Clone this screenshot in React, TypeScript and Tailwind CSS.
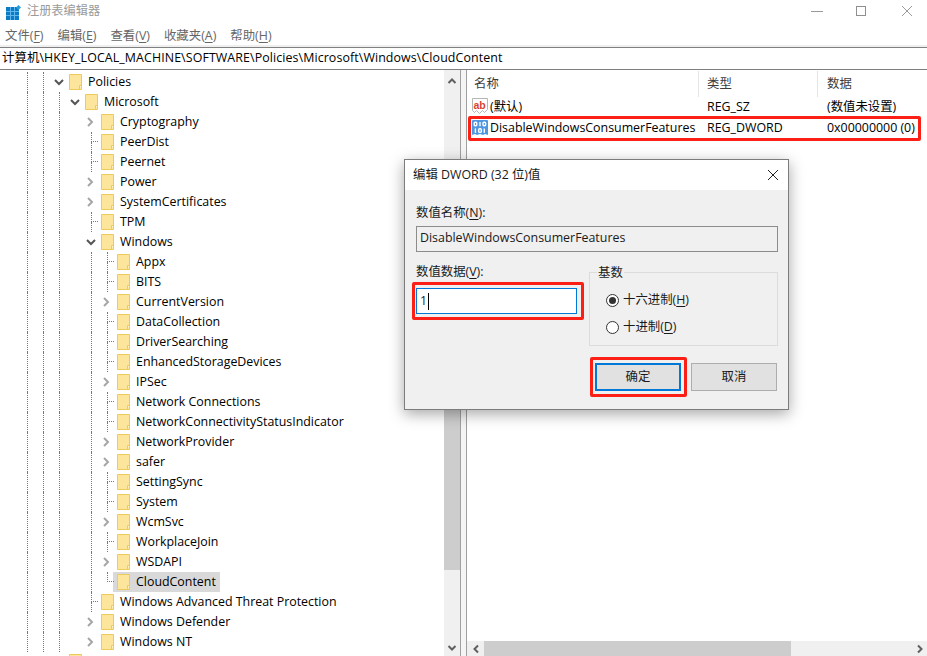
import React from "react";

const FONT = "font-['Open_Sans','Noto_Sans_CJK_SC',sans-serif]";

type Row = { label: string; depth: number; toggle?: "open" | "closed"; selected?: boolean; last?: boolean };

const rows: Row[] = [
  { label: "Policies", depth: 0, toggle: "open" },
  { label: "Microsoft", depth: 1, toggle: "open" },
  { label: "Cryptography", depth: 2, toggle: "closed" },
  { label: "PeerDist", depth: 2 },
  { label: "Peernet", depth: 2 },
  { label: "Power", depth: 2, toggle: "closed" },
  { label: "SystemCertificates", depth: 2, toggle: "closed" },
  { label: "TPM", depth: 2 },
  { label: "Windows", depth: 2, toggle: "open" },
  { label: "Appx", depth: 3 },
  { label: "BITS", depth: 3 },
  { label: "CurrentVersion", depth: 3, toggle: "closed" },
  { label: "DataCollection", depth: 3 },
  { label: "DriverSearching", depth: 3 },
  { label: "EnhancedStorageDevices", depth: 3 },
  { label: "IPSec", depth: 3, toggle: "closed" },
  { label: "Network Connections", depth: 3 },
  { label: "NetworkConnectivityStatusIndicator", depth: 3 },
  { label: "NetworkProvider", depth: 3, toggle: "closed" },
  { label: "safer", depth: 3, toggle: "closed" },
  { label: "SettingSync", depth: 3 },
  { label: "System", depth: 3 },
  { label: "WcmSvc", depth: 3, toggle: "closed" },
  { label: "WorkplaceJoin", depth: 3 },
  { label: "WSDAPI", depth: 3, toggle: "closed" },
  { label: "CloudContent", depth: 3, selected: true, last: true },
  { label: "Windows Advanced Threat Protection", depth: 2 },
  { label: "Windows Defender", depth: 2, toggle: "closed" },
  { label: "Windows NT", depth: 2, toggle: "closed" },
];

function Folder() {
  return (
    <svg width="13" height="16" viewBox="0 0 13 16" className="shrink-0">
      <path d="M.5.5h12v15H.5z" fill="#fde59b" stroke="#eccb5e" />
      <path d="M10.5 15.5v-4h2" fill="#fff4c8" stroke="#eccb5e" />
    </svg>
  );
}

function Toggle({ kind }: { kind: "open" | "closed" }) {
  if (kind === "open")
    return (
      <svg width="10" height="7" viewBox="0 0 10 7">
        <path d="M1 1l4 4 4-4" fill="none" stroke="#555" strokeWidth="2" />
      </svg>
    );
  return (
    <svg width="7" height="10" viewBox="0 0 7 10">
      <path d="M1 1l4 4-4 4" fill="none" stroke="#a6a6a6" strokeWidth="2" />
    </svg>
  );
}

function Guide() {
  return <div className="h-full w-4 shrink-0 border-l border-dotted border-[#777]" />;
}

function Blank() {
  return <div className="h-full w-4 shrink-0" />;
}

function Marker({ row }: { row: Row }) {
  const line = row.depth !== 1;
  return (
    <div className="relative flex h-full w-[10px] shrink-0 flex-col">
      <div className={`h-1/2 w-[7px] ${line ? "border-l border-dotted border-[#777]" : ""} ${row.toggle ? "" : "border-b border-dotted border-[#777]"}`} />
      {!row.last && <div className={`h-1/2 ${line ? "border-l border-dotted border-[#777]" : ""}`} />}
      {row.toggle && (
        <div className="absolute left-[-6px] top-0 flex h-full w-[11px] items-center justify-center bg-white">
          <Toggle kind={row.toggle} />
        </div>
      )}
    </div>
  );
}

function TreeRow({ row }: { row: Row }) {
  return (
    <div className="flex h-5 shrink-0 items-center pl-[27px]">
      <Guide />
      <Guide />
      {row.depth >= 1 && <Guide />}
      {row.depth >= 2 && <Blank />}
      {row.depth >= 3 && <Guide />}
      <Marker row={row} />
      <div className={`flex h-full shrink-0 items-center ${row.selected ? "-ml-[4px] bg-[#d9d9d9] pl-[4px]" : ""}`}>
        <Folder />
        <span className="pl-[6px] pr-[4px] whitespace-nowrap text-black">{row.label}</span>
      </div>
    </div>
  );
}

function ScrollArrow({ d }: { d: string }) {
  return (
    <svg width="10" height="10" viewBox="0 0 10 10">
      <path d={d} fill="none" stroke="#606060" strokeWidth="2" />
    </svg>
  );
}

function ValueRow({ icon, name, type, data, className }: { icon: React.ReactNode; name: string; type: string; data: string; className?: string }) {
  return (
    <div className={`flex h-5 items-center text-black ${className ?? ""}`}>
      <div className="flex w-[232px] items-center pl-[5px]">
        {icon}
        <span className="pl-[2px] whitespace-nowrap">{name}</span>
      </div>
      <div className="w-[120px] pl-[8px] whitespace-nowrap">{type}</div>
      <div className="whitespace-nowrap pl-[8px]">{data}</div>
    </div>
  );
}

const AbIcon = (
  <svg width="16" height="17" viewBox="0 0 16 17" className="shrink-0">
    <path d="M.5.5h15v11l-3 3-2-2-3 3-3-3-2 2-2-2z" fill="#fff" stroke="#b5b5b5" />
    <text x="1.5" y="10.5" fontSize="10.5" fontWeight="700" fill="#d9432f" fontFamily="Liberation Sans">ab</text>
  </svg>
);

const BinIcon = (
  <svg width="16" height="16" viewBox="0 0 16 16" className="shrink-0">
    <path d="M0 1q0-1 1-1h14q1 0 1 1v14l-3-1-2 1-3-1-3 1-2-1-3 1z" fill="#4f97e0" />
    <g fill="none" stroke="#fff" strokeWidth="1.4">
      <rect x="2.2" y="2.2" width="2.6" height="3.6" rx="1" />
      <path d="M8 2v4.2" />
      <rect x="11" y="2.2" width="2.6" height="3.6" rx="1" />
      <path d="M3.4 8.4v4.4" />
      <rect x="6.7" y="8.8" width="2.6" height="3.6" rx="1" />
      <path d="M12.3 8.4v4.4" />
    </g>
  </svg>
);

function U({ children }: { children: React.ReactNode }) {
  return <span className="underline underline-offset-2">{children}</span>;
}

function Radio({ checked }: { checked?: boolean }) {
  return (
    <span className="flex h-[13px] w-[13px] shrink-0 items-center justify-center rounded-full border border-[#333] bg-white">
      {checked && <span className="h-[7px] w-[7px] rounded-full bg-[#333]" />}
    </span>
  );
}

function Dialog() {
  return (
    <div className="absolute left-[404px] top-[159px] flex h-[251px] w-[385px] flex-col border border-[#7c7c7c] bg-[#f0f0f0] text-[#1a1a1a] shadow-[0_4px_14px_rgba(0,0,0,0.35)]">
      <div className="flex h-[30px] shrink-0 items-center justify-between bg-white pl-[8px] pr-[9px]">
        <span>编辑 DWORD (32 位)值</span>
        <svg width="12" height="12" viewBox="0 0 12 12">
          <path d="M1 1l10 10M11 1L1 11" stroke="#222" strokeWidth="1" fill="none" />
        </svg>
      </div>
      <div className="flex flex-1 flex-col pl-[11px] pt-[13px]">
        <div className="h-5 leading-5">数值名称(<U>N</U>):</div>
        <div className="mt-[3px] flex h-[26px] w-[362px] items-center border border-[#8c8c8c] bg-[#f0f0f0] pb-[1px] pl-[3px]">
          DisableWindowsConsumerFeatures
        </div>
        <div className="mt-[10px] flex">
          <div className="w-[173px]">
            <div className="h-5 leading-5">数值数据(<U>V</U>):</div>
            <div className="mt-[6px] flex h-[26px] w-[161px] items-center border border-[#0078d7] bg-white pl-[3px]">
              <span>1</span>
              <span className="ml-[1px] h-[17px] w-px bg-black" />
            </div>
          </div>
          <div className="relative mt-[10px] h-[74px] w-[189px] border border-[#dcdcdc]">
            <span className="absolute left-[7px] top-[-9px] bg-[#f0f0f0] px-[1px] leading-[18px]">基数</span>
            <div className="flex h-[36px] items-center gap-[4px] pl-[16px] pt-[18px]">
              <Radio checked />
              <span className="leading-[18px]">十六进制(<U>H</U>)</span>
            </div>
            <div className="flex h-[27px] items-center gap-[4px] pl-[16px] pt-[9px]">
              <Radio />
              <span className="leading-[18px]">十进制(<U>D</U>)</span>
            </div>
          </div>
        </div>
        <div className="mt-[17px] flex justify-end gap-[10px] pr-[11px]">
          <div className="flex h-[28px] w-[86px] items-center justify-center border-2 border-[#0078d7] bg-[#e1e1e1]">确定</div>
          <div className="flex h-[28px] w-[86px] items-center justify-center border border-[#adadad] bg-[#e1e1e1]">取消</div>
        </div>
      </div>
    </div>
  );
}

function Highlight({ className }: { className: string }) {
  return <div className={`absolute rounded-[2px] border-[3px] border-[#fb1f16] ${className}`} />;
}

export default function App() {
  return (
    <div className={`relative flex h-[656px] w-[927px] flex-col overflow-hidden bg-white text-[12.4px] ${FONT}`}>
      <div className="flex h-[22px] shrink-0 items-center justify-between">
        <div className="flex items-center pl-[6px]">
          <svg width="16" height="15" viewBox="0 0 16 15" className="mt-[4px] shrink-0 self-start">
            <path d="M0 2h13v13H0z" fill="#0a7bc4" />
            <path d="M4.5 2v13M8.5 2v13M0 6.5h13M0 10.5h13" stroke="#5fb6ea" strokeWidth="1" />
            <path d="M12.5 0l2.5 2.5L12.5 5 10 2.5z" fill="#2d9fd8" />
          </svg>
          <span className="pl-[5px] pt-[1px] text-[12.2px] text-[#9a9a9a]">注册表编辑器</span>
        </div>
        <div className="flex items-center">
          <div className="mr-[33px] h-px w-3 bg-[#9a9a9a]" />
          <div className="mr-[36px] h-[10px] w-[10px] border border-[#8f8f8f]" />
          <svg width="10" height="10" viewBox="0 0 10 10" className="mr-[15px]">
            <path d="M0 0l10 10M10 0L0 10" stroke="#9a9a9a" strokeWidth="1" />
          </svg>
        </div>
      </div>

      <div className="flex h-[23px] shrink-0 items-center gap-[14px] pl-[5px] pt-[6px] text-[#666]">
        <span>文件(<U>F</U>)</span>
        <span>编辑(<U>E</U>)</span>
        <span>查看(<U>V</U>)</span>
        <span>收藏夹(<U>A</U>)</span>
        <span>帮助(<U>H</U>)</span>
      </div>

      <div className="h-[2px] shrink-0 bg-[#efefef]" />
      <div className="flex h-[23px] shrink-0 items-center border-y border-y-[#808080] pl-[2px] tracking-[0.1px] whitespace-nowrap text-black">
        计算机\HKEY_LOCAL_MACHINE\SOFTWARE\Policies\Microsoft\Windows\CloudContent
      </div>

      <div className="flex min-h-0 flex-1">
        <div className="flex w-[444px] shrink-0 flex-col overflow-hidden pt-[2px]">
          {rows.map((r) => (
            <TreeRow key={r.label} row={r} />
          ))}
          <div className="flex h-5 shrink-0 items-center pl-[69px]">
            <Folder />
          </div>
        </div>

        <div className="flex w-[16px] shrink-0 flex-col bg-[#f0f0f0]">
          <div className="flex h-[22px] shrink-0 items-center justify-center">
            <ScrollArrow d="M1.5 7l3.5-3.5L8.5 7" />
          </div>
          <div className="mt-[208px] h-[270px] shrink-0 bg-[#cdcdcd]" />
          <div className="flex-1" />
          <div className="flex h-[16px] shrink-0 items-center justify-center">
            <ScrollArrow d="M1.5 3l3.5 3.5L8.5 3" />
          </div>
        </div>

        <div className="w-[7px] shrink-0 border-x border-x-[#a0a0a0] bg-[#f5f5f5]" />

        <div className="flex min-w-0 flex-1 flex-col">
          <div className="flex h-[27px] shrink-0 items-center text-[#3c3c3c]">
            <div className="flex h-[26px] w-[232px] items-center border-r border-r-[#e5e5e5] pl-[7px] pt-[2px]">名称</div>
            <div className="flex h-[26px] w-[119px] items-center border-r border-r-[#e5e5e5] pl-[8px] pt-[2px]">类型</div>
            <div className="flex h-[26px] items-center pl-[9px] pt-[2px]">数据</div>
          </div>
          <ValueRow icon={AbIcon} name="(默认)" type="REG_SZ" data="(数值未设置)" />
          <ValueRow className="mt-px" icon={BinIcon} name="DisableWindowsConsumerFeatures" type="REG_DWORD" data="0x00000000 (0)" />
          <div className="flex-1" />
          <div className="flex h-[15px] shrink-0 items-center bg-[#f0f0f0]">
            <div className="flex w-[17px] justify-center">
              <ScrollArrow d="M7 1.5L3.5 5 7 8.5" />
            </div>
            <div className="h-full w-[307px] bg-[#cdcdcd]" />
            <div className="flex-1" />
            <div className="flex w-[14px] justify-center">
              <ScrollArrow d="M3 1.5L6.5 5 3 8.5" />
            </div>
          </div>
        </div>
      </div>

      <Dialog />
      <Highlight className="left-[468px] top-[116px] h-[25px] w-[453px]" />
      <Highlight className="left-[412px] top-[282px] h-[38px] w-[172px]" />
      <Highlight className="left-[590px] top-[357px] h-[40px] w-[97px]" />
    </div>
  );
}
